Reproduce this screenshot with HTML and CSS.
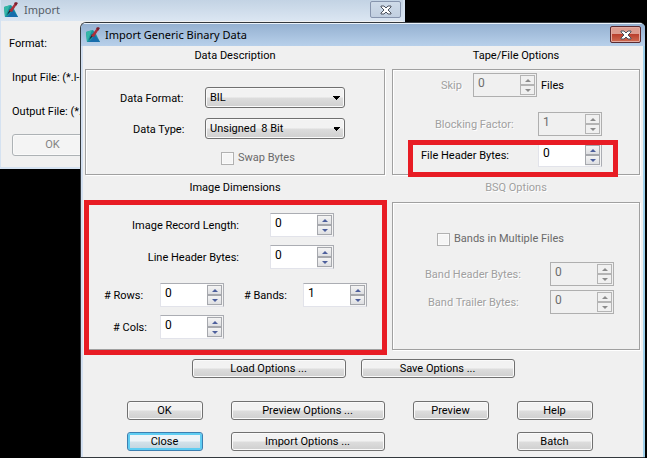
FILE: index.html
```html
<!DOCTYPE html>
<html lang="en">
<head>
<meta charset="utf-8">
<title>Import Generic Binary Data</title>
<link rel="stylesheet" href="styles.css">
</head>
<body>
<svg width="0" height="0" class="defs" aria-hidden="true">
  <symbol id="logo" viewBox="0 0 14 16">
    <path d="M0 5l7-2 3 4 4 8H1z" fill="#1795a0"/>
    <path d="M0 5l6-2-5 12z" fill="#35b7a6"/>
    <path d="M4 14l5-6 5 7H2z" fill="#176dac"/>
    <path d="M3 13l3-6 2 1z" fill="#151c2c"/>
    <path d="M5 9l6-8 2 1-5 8z" fill="#a92f3a"/>
    <path d="M10 1l2-1 2 1-2 3z" fill="#7c2030"/>
  </symbol>
  <symbol id="cross" viewBox="0 0 12 10">
    <path d="M1 1h3l2 2 2-2h3v1L8 5l3 3v1H8L6 7 4 9H1V8l3-3-3-3z" fill="#fff" stroke="#4c525e" stroke-width="1"/>
  </symbol>
</svg>
<main class="desktop">
  <section class="window back" aria-label="Import">
    <header class="titlebar">
      <svg class="logo"><use href="#logo"/></svg>
      <h1 class="title">Import</h1>
      <button class="close" aria-label="Close Import"><svg class="cross"><use href="#cross"/></svg></button>
    </header>
    <div class="back-body">
      <p>Format:</p>
      <p class="file">Input File: (*.l-3</p>
      <p class="file">Output File: (*.i</p>
      <button class="btn back-ok" disabled>OK</button>
    </div>
  </section>

  <section class="window dialog" aria-label="Import Generic Binary Data">
    <header class="titlebar">
      <svg class="logo"><use href="#logo"/></svg>
      <h1 class="title">Import Generic Binary Data</h1>
      <button class="close active" aria-label="Close dialog"><svg class="cross"><use href="#cross"/></svg></button>
    </header>
    <div class="groups">
      <section class="group">
        <h2>Data Description</h2>
        <div class="panel description">
          <div class="row pick"><label for="format">Data Format:</label><select id="format"><option>BIL</option></select></div>
          <div class="row pick type"><label for="type">Data Type:</label><select id="type"><option>Unsigned&nbsp; 8 Bit</option></select></div>
          <label class="check"><input type="checkbox" disabled>Swap Bytes</label>
        </div>
      </section>
      <section class="group">
        <h2>Tape/File Options</h2>
        <div class="panel tape">
          <div class="row skip">
            <label class="off" for="skip">Skip</label>
            <span class="spin"><input id="skip" value="0" disabled><button class="up" aria-label="More" disabled></button><button class="down" aria-label="Less" disabled></button></span>
            <span class="unit">Files</span>
          </div>
          <div class="row blocking">
            <label class="off" for="blocking">Blocking Factor:</label>
            <span class="spin"><input id="blocking" value="1" disabled><button class="up" aria-label="More" disabled></button><button class="down" aria-label="Less" disabled></button></span>
          </div>
          <div class="row header-bytes">
            <label for="fileheader">File Header Bytes:</label>
            <span class="spin"><input id="fileheader" value="0"><button class="up" aria-label="More"></button><button class="down" aria-label="Less"></button></span>
            <i class="mark"></i>
          </div>
        </div>
      </section>
      <section class="group">
        <h2>Image Dimensions</h2>
        <div class="panel dimensions">
          <div class="row wide">
            <label for="record">Image Record Length:</label>
            <span class="spin"><input id="record" value="0"><button class="up" aria-label="More"></button><button class="down" aria-label="Less"></button></span>
          </div>
          <div class="row wide">
            <label for="line">Line Header Bytes:</label>
            <span class="spin"><input id="line" value="0"><button class="up" aria-label="More"></button><button class="down" aria-label="Less"></button></span>
          </div>
          <div class="row counts">
            <label for="rows"># Rows:</label>
            <span class="spin"><input id="rows" value="0"><button class="up" aria-label="More"></button><button class="down" aria-label="Less"></button></span>
            <label class="bands" for="bands"># Bands:</label>
            <span class="spin"><input id="bands" value="1"><button class="up" aria-label="More"></button><button class="down" aria-label="Less"></button></span>
          </div>
          <div class="row counts cols">
            <label for="cols"># Cols:</label>
            <span class="spin"><input id="cols" value="0"><button class="up" aria-label="More"></button><button class="down" aria-label="Less"></button></span>
          </div>
          <i class="mark"></i>
        </div>
      </section>
      <section class="group">
        <h2 class="off">BSQ Options</h2>
        <div class="panel bsq">
          <label class="check"><input type="checkbox" disabled>Bands in Multiple Files</label>
          <div class="row">
            <label class="off" for="bandheader">Band Header Bytes:</label>
            <span class="spin"><input id="bandheader" value="0" disabled><button class="up" aria-label="More" disabled></button><button class="down" aria-label="Less" disabled></button></span>
          </div>
          <div class="row trailer">
            <label class="off" for="trailer">Band Trailer Bytes:</label>
            <span class="spin"><input id="trailer" value="0" disabled><button class="up" aria-label="More" disabled></button><button class="down" aria-label="Less" disabled></button></span>
          </div>
        </div>
      </section>
    </div>
    <div class="presets">
      <button class="btn">Load Options ...</button>
      <button class="btn">Save Options ...</button>
    </div>
    <div class="actions">
      <button class="btn">OK</button>
      <button class="btn">Preview Options ...</button>
      <button class="btn">Preview</button>
      <button class="btn">Help</button>
      <button class="btn default">Close</button>
      <button class="btn">Import Options ...</button>
      <button class="btn last">Batch</button>
    </div>
  </section>
</main>
</body>
</html>
```

FILE: styles.css
```css
* { box-sizing: border-box; }
body {
  margin: 0;
  background: #000;
  color: #000;
  font: 11px/16px Roboto, "Liberation Sans", sans-serif;
}
button, input, select { font: inherit; color: inherit; margin: 0; }
h1, h2, p { margin: 0; font-size: 11px; font-weight: 400; }
.defs { position: absolute; }
.desktop { position: relative; min-height: 100vh; overflow: hidden; }

.window { position: absolute; background: #f0f0f0; overflow: hidden; }
.titlebar { display: flex; align-items: center; }
.title { flex: 1; font-family: "Noto Sans", "Open Sans", sans-serif; line-height: 16px; }
.logo { width: 14px; height: 16px; }
.close {
  display: flex;
  align-items: center;
  justify-content: center;
  width: 31px;
  height: 17px;
  padding: 0;
  border: 1px solid #8795ae;
  border-radius: 2px;
  background: linear-gradient(#cfdbe9, #c1cfe0);
}
.cross { width: 12px; height: 10px; }
.close.active {
  border-color: #5a2a30;
  background: linear-gradient(#dc9c90 0 45%, #b9402e 50%, #cf6c52);
  box-shadow: inset 0 0 0 1px #e3aaa0;
}

.back {
  top: 0;
  left: 0;
  right: 242px;
  border: solid #d5e2f1;
  border-width: 0 2px 2px 1px;
}
.back .titlebar {
  height: 21px;
  padding: 0 2px 2px 3px;
  gap: 6px;
  color: #555c66;
  background: linear-gradient(#c3d3e4, #dbe6f2);
}
.back-body { padding: 15px 8px 11px; }
.back-body p { height: 16px; margin-bottom: 18px; white-space: nowrap; }
.back-body .file { padding-left: 3px; }
.back-body .file + .file { margin-bottom: 14px; }
.back-body .back-ok { display: block; width: 81px; height: 22px; margin-left: 3px; }

.dialog {
  top: 22px;
  left: 80px;
  right: 2px;
  bottom: 0;
  border: solid #33383d;
  border-width: 1px 0 1px 1px;
  border-radius: 6px 6px 0 0;
  box-shadow: inset 2px 0 #d2dff0, inset -2px 0 #9fd0ea;
}
.dialog .titlebar {
  height: 23px;
  padding: 0 4px 1px 5px;
  gap: 5px;
  border-top: 1px solid #eaf2fa;
  background: linear-gradient(#95b1d1, #b8d0ea);
}

.groups {
  display: grid;
  grid-template-columns: 300fr 248fr;
  column-gap: 7px;
  padding: 0 5px 0 4px;
}
h2 { padding: 2px 0 5px; text-align: center; line-height: 16px; }
.group:nth-child(n+3) h2 { padding: 5px 0 6px; }
.off { color: #a0a0a0; text-shadow: 1px 1px #fff; }
.panel {
  position: relative;
  border: 1px solid #a0a0a0;
  box-shadow: inset 1px 1px #fff, 1px 1px #fff;
}
.group:nth-child(-n+2) .panel { height: 106px; }
.group:nth-child(n+3) .panel { height: 148px; }

.row { position: relative; display: flex; align-items: center; white-space: nowrap; }
.row label { flex: 1; }
.row label, .unit { padding-top: 2px; }
.check { display: flex; align-items: center; gap: 4px; color: #6a6a6a; }
.check input {
  appearance: none;
  width: 13px;
  height: 13px;
  border: 1px solid #b1b1b1;
  background: #f5f5f5;
  box-shadow: inset 0 0 0 1px #fafafa;
}

select {
  appearance: none;
  width: 140px;
  height: 21px;
  padding: 0 4px;
  border: 1px solid #707070;
  border-radius: 3px;
  background:
    linear-gradient(to bottom left, #000 50%, transparent 50%) 127px 8px / 4px 4px no-repeat,
    linear-gradient(to bottom right, #000 50%, transparent 50%) 131px 8px / 4px 4px no-repeat,
    linear-gradient(#f2f2f2 0 48%, #dddddd 52%, #cfcfcf);
  box-shadow: inset 0 0 0 1px #fafafa;
}

.spin {
  display: grid;
  grid-template: 10px 10px / 1fr 15px;
  width: 64px;
  height: 24px;
  padding: 1px;
  border: 1px solid #abadb3;
  border-left-color: #e2e3ea;
  border-bottom-color: #e2e3ea;
  background: linear-gradient(to right, #fff 46px, #f4f4f4 46px);
}
.spin input {
  grid-row: 1 / 3;
  width: 100%;
  min-width: 0;
  padding: 0 3px 4px;
  border: 0;
  background: none;
  font-size: 12px;
}
.spin button {
  display: grid;
  place-items: center;
  padding: 0;
  border: 1px solid #a6a8ad;
  background: linear-gradient(#f4f4f4, #dedfe2);
}
.spin button::before { content: ""; border: solid transparent; border-width: 0 3px; }
.spin .up::before { border-bottom: 3px solid #4d5f9c; }
.spin .down::before { border-top: 3px solid #4d5f9c; }
.spin:has(input:disabled) { border-color: #afafaf; background: #f0f0f0; }
.spin input:disabled { color: #6d6d6d; }
.spin button:disabled { background: #f0f0f0; border-color: #b4b4b4; }
.spin .up:disabled::before { border-bottom-color: #8b8b8b; }
.spin .down:disabled::before { border-top-color: #8b8b8b; }

.description { padding: 17px 39px 0 34px; }
.pick { margin-bottom: 10px; }
.pick.type { padding-left: 13px; margin-bottom: 11px; }
.description .check { margin-left: 101px; }

.tape { padding: 3px 37px 0 28px; }
.skip { padding-left: 20px; gap: 4px; margin-bottom: 15px; }
.skip label { flex: 0 0 28px; }
.blocking { padding-left: 14px; margin-bottom: 7px; }

.dimensions { padding: 10px 17px 0 18px; }
.row.wide { margin: 0 33px 8px 0; }
.row.wide label { text-align: right; padding-right: 31px; }
.row.counts { margin-top: 14px; }
.row.counts label { flex: 0 0 56px; }
.row.counts .bands { flex-basis: 59px; margin-left: 20px; }
.row.cols { margin-top: 8px; padding-left: 9px; }
.row.cols label:first-child { flex-basis: 47px; }

.bsq { padding: 28px 25px 0 32px; }
.bsq .check { height: 16px; margin: 0 0 15px 12px; }
.bsq .row { margin-bottom: 4px; }
.bsq .trailer { padding-left: 3px; }

.mark { position: absolute; border: 5px solid #e81c24; pointer-events: none; }
.header-bytes .mark { inset: -3px -16px -10px -13px; }
.dimensions .mark { inset: -3px -3px -6px -2px; }

.btn {
  height: 19px;
  padding: 0;
  border: 1px solid #707070;
  border-radius: 3px;
  background: linear-gradient(#f2f2f2 0 48%, #dddddd 52%, #cfcfcf);
  box-shadow: inset 0 0 0 1px #fafafa;
  line-height: 16px;
}
.btn:disabled { color: #838383; border-color: #adb2b5; background: #f4f4f4; }
.btn.default {
  border-color: #3c7fb1;
  background: linear-gradient(#eef4f8 0 48%, #d3e2ea 52%, #c0d3de);
  box-shadow: inset 0 0 0 2px #5fcdf2;
}
.presets {
  display: grid;
  grid-template-columns: 154px 154px;
  justify-content: center;
  gap: 15px;
  padding: 9px 20px 23px 0;
}
.actions {
  display: grid;
  grid-template-columns: 76px 154px 76px 76px;
  justify-content: center;
  gap: 12px 28px;
  padding: 0 7px 6px 0;
}
.actions .last { grid-column: 4; }
```
